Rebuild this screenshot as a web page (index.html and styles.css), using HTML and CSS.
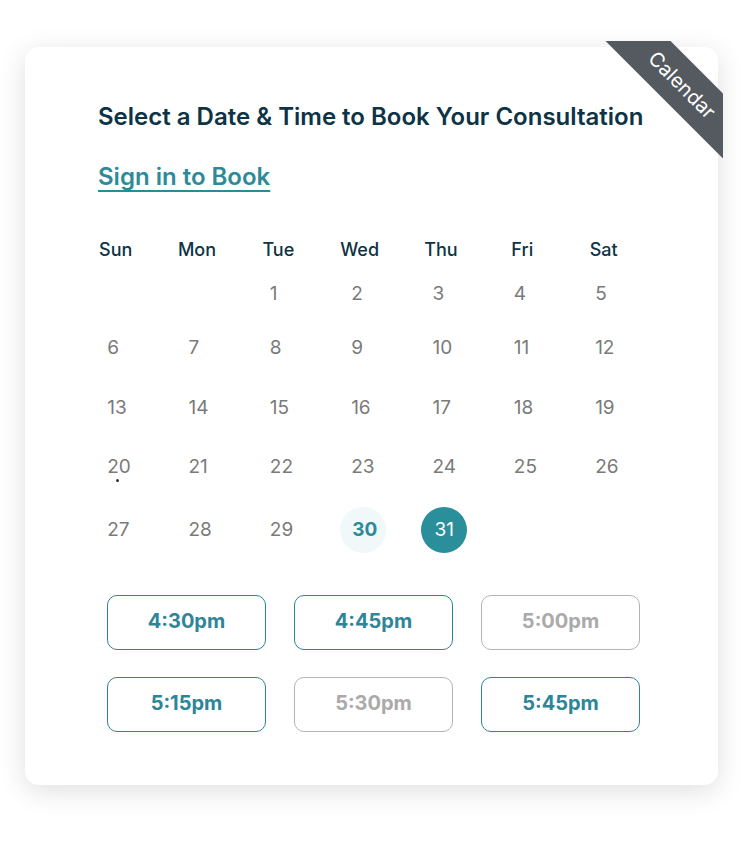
FILE: index.html
```html
<!DOCTYPE html>
<html lang="en">
<head>
<meta charset="utf-8">
<title>Book a Consultation</title>
<link rel="stylesheet" href="styles.css">
</head>
<body>
<div class="page">
  <div class="card">
    <div class="ribbon"><span>Calendar</span></div>
    <h1 class="title">Select a Date &amp; Time to Book Your Consultation</h1>
    <a class="signin" href="#">Sign in to Book</a>
    <div class="weekdays">
      <div class="dow">Sun</div><div class="dow">Mon</div><div class="dow">Tue</div><div class="dow">Wed</div><div class="dow">Thu</div><div class="dow">Fri</div><div class="dow">Sat</div>
    </div>
    <div class="days">
      <div class="day"></div><div class="day"></div>
      <div class="day"><span>1</span></div><div class="day"><span>2</span></div><div class="day"><span>3</span></div><div class="day"><span>4</span></div><div class="day"><span>5</span></div>

      <div class="day"><span>6</span></div><div class="day"><span>7</span></div><div class="day"><span>8</span></div><div class="day"><span>9</span></div><div class="day"><span>10</span></div><div class="day"><span>11</span></div><div class="day"><span>12</span></div>

      <div class="day"><span>13</span></div><div class="day"><span>14</span></div><div class="day"><span>15</span></div><div class="day"><span>16</span></div><div class="day"><span>17</span></div><div class="day"><span>18</span></div><div class="day"><span>19</span></div>

      <div class="day"><span class="today">20</span></div><div class="day"><span>21</span></div><div class="day"><span>22</span></div><div class="day"><span>23</span></div><div class="day"><span>24</span></div><div class="day"><span>25</span></div><div class="day"><span>26</span></div>

      <div class="day"><span>27</span></div><div class="day"><span>28</span></div><div class="day"><span>29</span></div><div class="day"><span class="available">30</span></div><div class="day"><span class="selected">31</span></div><div class="day"></div><div class="day"></div>
    </div>
    <div class="times">
      <button class="slot">4:30pm</button>
      <button class="slot">4:45pm</button>
      <button class="slot disabled">5:00pm</button>
      <button class="slot">5:15pm</button>
      <button class="slot disabled">5:30pm</button>
      <button class="slot">5:45pm</button>
    </div>
  </div>
</div>
</body>
</html>
```
FILE: styles.css
```css
* { box-sizing: border-box; }
html, body { margin: 0; padding: 0; background: #ffffff; }
body { font-family: "Inter", "Noto Sans", sans-serif; }

.page {
  padding: 47px 31px 40px 25px;
}

.card {
  position: relative;
  width: 693px;
  height: 738px;
  background: #ffffff;
  border-radius: 14px;
  box-shadow: 0 6px 28px rgba(0, 0, 0, 0.13);
  padding: 56px 0 0 0;
}

.ribbon {
  position: absolute;
  top: -6px;
  right: -5px;
  width: 120px;
  height: 120px;
  overflow: hidden;
}
.ribbon span {
  position: absolute;
  left: -21px;
  top: 21px;
  width: 200px;
  height: 46px;
  line-height: 46px;
  text-align: center;
  background: #545a5f;
  color: #ffffff;
  font-size: 20px;
  font-weight: 400;
  transform: rotate(45deg);
}

.title {
  margin: 0 0 0 73px;
  font-size: 24px;
  line-height: 28px;
  font-weight: 600;
  color: #0d3345;
}

.signin {
  display: inline-block;
  margin: 31px 0 0 73px;
  font-size: 24px;
  line-height: 30px;
  font-weight: 600;
  color: #2e8a98;
  text-decoration: underline;
  text-decoration-thickness: 2px;
  text-underline-offset: 5px;
}

.weekdays,
.days {
  display: grid;
  grid-template-columns: repeat(7, 81.34px);
  margin-left: 50px;
}
.weekdays {
  margin-top: 46px;
}
.days {
  margin-top: 7px;
  grid-template-rows: 50px 58px 62px 56px 70px;
}

.dow {
  text-align: center;
  font-size: 18px;
  line-height: 24px;
  font-weight: 500;
  color: #0d3345;
}

.day {
  display: flex;
  align-items: center;
  padding-left: calc(50% - 19.5px);
}
.day span {
  position: relative;
  display: block;
  width: 46px;
  height: 46px;
  border-radius: 50%;
  padding-left: 11px;
  line-height: 46px;
  font-size: 19px;
  font-weight: 400;
  color: #7a7a7a;
}
.day span.today::after {
  content: "";
  position: absolute;
  left: 20px;
  top: 35px;
  width: 3px;
  height: 3px;
  border-radius: 50%;
  background: #333333;
}
.day span.available {
  background: #f0f8f9;
  color: #2e8a98;
  font-weight: 700;
  padding-left: 12px;
}
.day span.selected {
  background: #2a8f9b;
  color: #ffffff;
  padding-left: 13px;
}

.times {
  display: grid;
  grid-template-columns: repeat(3, 159px);
  grid-auto-rows: 55px;
  column-gap: 28px;
  row-gap: 27px;
  margin: 30px 0 0 82px;
}
.slot {
  font-family: "Inter", "Noto Sans", sans-serif;
  font-size: 20px;
  font-weight: 700;
  color: #2e8599;
  background: #ffffff;
  border: 1px solid #2e8599;
  border-radius: 10px;
  padding: 0 0 4px 0;
}
.slot.disabled {
  color: #aaaaaa;
  border-color: #b4b4b4;
}
```
